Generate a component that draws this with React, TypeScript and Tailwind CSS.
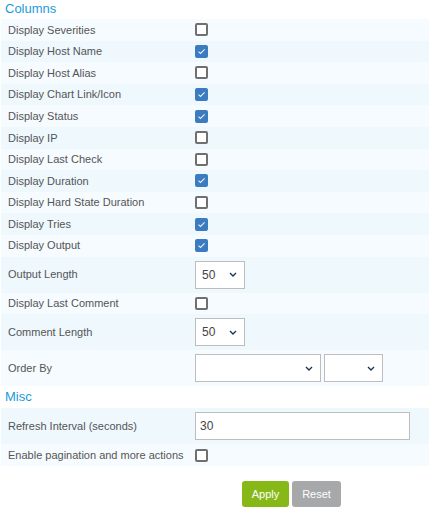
import React from "react";

const Check = ({ on }: { on: boolean }) =>
  on ? (
    <span className="flex h-[13px] w-[13px] items-center justify-center rounded-[2px] bg-[#3b7cc0]">
      <svg width="9" height="7" viewBox="0 0 9 7">
        <path d="M1.5 3.6 L3.5 5.4 L7.6 1.4" fill="none" stroke="#e8f0fa" strokeWidth="1.1" />
      </svg>
    </span>
  ) : (
    <span className="block h-[13px] w-[13px] rounded-[2px] border-2 border-[#707070] bg-white" />
  );

const Chevron = () => (
  <svg width="8" height="5" viewBox="0 0 8 5">
    <path d="M1 1 L4 4 L7 1" fill="none" stroke="#1d3557" strokeWidth="1.4" />
  </svg>
);

const Select = ({ w, value }: { w: string; value?: string }) => (
  <div className={`flex h-[28px] items-center justify-between border border-[#bdbdbd] bg-white pl-[6px] pr-[7px] text-[12px] text-[#444] ${w}`}>
    <span>{value ?? ""}</span>
    <Chevron />
  </div>
);

type Row = { label: string; kind: "cb"; on: boolean } | { label: string; kind: "node"; node: React.ReactNode; tall?: boolean };

const rows: Row[] = [
  { label: "Display Severities", kind: "cb", on: false },
  { label: "Display Host Name", kind: "cb", on: true },
  { label: "Display Host Alias", kind: "cb", on: false },
  { label: "Display Chart Link/Icon", kind: "cb", on: true },
  { label: "Display Status", kind: "cb", on: true },
  { label: "Display IP", kind: "cb", on: false },
  { label: "Display Last Check", kind: "cb", on: false },
  { label: "Display Duration", kind: "cb", on: true },
  { label: "Display Hard State Duration", kind: "cb", on: false },
  { label: "Display Tries", kind: "cb", on: true },
  { label: "Display Output", kind: "cb", on: true },
  { label: "Output Length", kind: "node", node: <Select w="w-[50px]" value="50" />, tall: true },
  { label: "Display Last Comment", kind: "cb", on: false },
  { label: "Comment Length", kind: "node", node: <Select w="w-[50px]" value="50" />, tall: true },
  {
    label: "Order By",
    kind: "node",
    tall: true,
    node: (
      <div className="flex gap-[3px]">
        <Select w="w-[126px]" />
        <Select w="w-[59px]" />
      </div>
    ),
  },
];

const RowView = ({ r, i }: { r: Row; i: number }) => (
  <div
    className={`flex items-center ${i % 2 === 0 ? "bg-[#f5fbfe]" : "bg-[#eef8fd]"} ${
      r.kind === "node" && r.tall ? "h-[36px]" : "h-[21.6px]"
    }`}
  >
    <div className="w-[194px] shrink-0 pl-[7px]">{r.label}</div>
    <div>{r.kind === "cb" ? <Check on={r.on} /> : r.node}</div>
  </div>
);

export default function App() {
  return (
    <div className="h-[514px] w-[429px] bg-white text-[11px] text-[#555] [font-family:'Liberation_Sans',Arial,sans-serif]">
      <div className="h-[19px] pl-[5px] pt-[1px] text-[13px] leading-[15px] text-[#1a9bd7]">Columns</div>
      <div className="ml-[1px]">
        {rows.map((r, i) => (
          <RowView key={r.label} r={r} i={i} />
        ))}
      </div>
      <div className="flex h-[22px] items-center pl-[5px] text-[13px] text-[#1a9bd7]">Misc</div>
      <div className="ml-[1px]">
        <div className="flex h-[36px] items-center bg-[#eef8fd]">
          <div className="w-[194px] shrink-0 pl-[7px]">Refresh Interval (seconds)</div>
          <div className="flex h-[28px] w-[215px] items-center border border-[#bdbdbd] bg-white pl-[4px] text-[12px] text-[#444]">
            30
          </div>
        </div>
        <div className="flex h-[22px] items-center bg-[#f5fbfe]">
          <div className="w-[194px] shrink-0 pl-[7px]">Enable pagination and more actions</div>
          <Check on={false} />
        </div>
      </div>
      <div className="mt-[15px] flex gap-[3px] pl-[242px]">
        <button className="h-[26px] w-[47px] rounded-[3px] bg-[#86b817] text-[11px] text-white">Apply</button>
        <button className="h-[26px] w-[49px] rounded-[3px] bg-[#a7a8aa] text-[11px] text-white">Reset</button>
      </div>
    </div>
  );
}
